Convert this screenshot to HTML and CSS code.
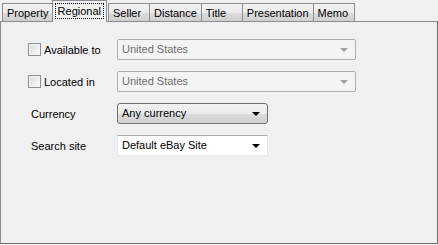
FILE: index.html
```html
<!DOCTYPE html>
<html lang="en">
<head>
    <meta charset="UTF-8">
    <title>Search options</title>
    <link rel="stylesheet" href="styles.css">
</head>
<body>
<div class="window">
    <div class="tabs">
        <div class="tab">Property</div>
        <div class="tab active"><span class="focus">Regional</span></div>
        <div class="tab">Seller</div>
        <div class="tab">Distance</div>
        <div class="tab">Title</div>
        <div class="tab">Presentation</div>
        <div class="tab">Memo</div>
    </div>
    <div class="panel">
        <div class="form">
            <label class="check"><span class="box"></span>Available to</label>
            <div class="combo disabled">United States<span class="arrow"></span></div>

            <label class="check"><span class="box"></span>Located in</label>
            <div class="combo disabled">United States<span class="arrow"></span></div>

            <div class="label">Currency</div>
            <div class="combo button">Any currency<span class="arrow"></span></div>

            <div class="label">Search site</div>
            <div class="combo edit">Default eBay Site<span class="arrow"></span></div>
        </div>
    </div>
</div>
</body>
</html>
```

FILE: styles.css
```css
*{
    margin: 0;
    padding: 0;
    box-sizing: border-box;
}
body{
    background: #f0f0f0;
    font-family: Tahoma, "Liberation Sans", Arial, sans-serif;
    font-size: 11px;
    color: #000;
}
.window{
    width: 438px;
    height: 245px;
    display: flex;
    flex-direction: column;
}
.tabs{
    display: flex;
    align-items: flex-end;
    height: 21px;
    padding-left: 2px;
    position: relative;
    z-index: 1;
}
.tab{
    height: 18px;
    min-width: 42px;
    padding: 2px 4px 0 4px;
    border: 1px solid #898c95;
    border-bottom: none;
    margin-right: -1px;
    background: linear-gradient(#f2f2f2, #ebebeb 50%, #dddddd 51%, #cfcfcf);
    line-height: 14px;
    white-space: nowrap;
}
.tab.active{
    height: 22px;
    margin-bottom: -1px;
    padding: 2px 2px 0 2px;
    background: #f0f0f0;
    margin-left: -1px;
    margin-right: 1px;
}
.focus{
    display: inline-block;
    border: 1px dotted #000;
    padding: 0 2px;
    line-height: 14px;
}
.panel{
    flex: 1;
    border: 1px solid #898c95;
    border-right-color: #6e6e6e;
    border-bottom-color: #6e6e6e;
    margin-bottom: 1px;
    background: #f0f0f0;
    padding: 17px 0 0 27px;
}
.form{
    display: grid;
    grid-template-columns: 89px auto;
    grid-auto-rows: 21px;
    row-gap: 11px;
    justify-content: start;
    align-items: center;
}
.check{
    display: flex;
    align-items: center;
}
.box{
    width: 13px;
    height: 13px;
    margin-right: 3px;
    border: 1px solid #8f8f8f;
    background: linear-gradient(135deg, #dcdcdc, #fbfbfb);
    box-shadow: inset 0 0 0 1px #f4f4f4;
}
.label{
    padding-left: 3px;
}
.combo{
    position: relative;
    height: 21px;
    line-height: 19px;
    padding-left: 4px;
}
.combo.disabled{
    width: 239px;
    color: #6d6d6d;
    background: #f4f4f4;
    border: 1px solid #adadad;
    border-radius: 2px;
}
.combo.button{
    width: 151px;
    background: linear-gradient(#f2f2f2, #ebebeb 50%, #dddddd 51%, #cfcfcf);
    border: 1px solid #707070;
    border-radius: 3px;
}
.combo.edit{
    width: 151px;
    background: #fff;
    border: 1px solid #e3e9ef;
    border-top-color: #abadb3;
}
.arrow{
    position: absolute;
    right: 7px;
    top: 8px;
    border-left: 4px solid transparent;
    border-right: 4px solid transparent;
    border-top: 4px solid #000;
}
.disabled .arrow{
    border-top-color: #a0a0a0;
}
```
